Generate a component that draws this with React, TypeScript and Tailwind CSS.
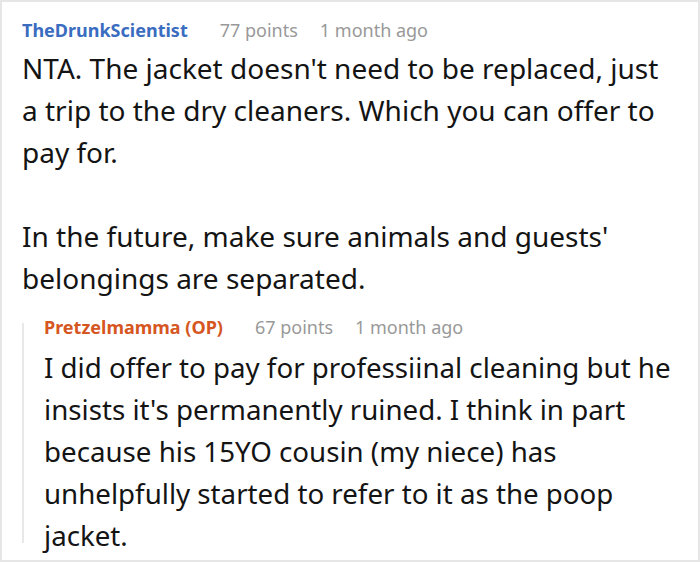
import React from 'react';

type Meta = { author: string; points: string; time: string; op?: boolean };

const Header: React.FC<Meta> = ({ author, points, time, op }) => (
  <div className="flex items-center text-[18px] leading-[24px] whitespace-nowrap">
    <span className={`font-bold mr-[32px] ${op ? 'text-[#d6561f]' : 'text-[#3a6cbf]'}`}>{author}</span>
    <span className="text-[#999999] mr-[22px]">{points}</span>
    <span className="text-[#999999]">{time}</span>
  </div>
);

export default function App() {
  return (
    <div
      className="w-[700px] h-[562px] border-2 border-[#e6e6e6] bg-white overflow-hidden"
      style={{ fontFamily: '"Noto Sans", "Open Sans", sans-serif' }}
    >
      <div className="pl-[20px] pr-[22px] pt-[16px]">
        <Header author="TheDrunkScientist" points="77 points" time="1 month ago" />
        <div className="text-[28px] leading-[42px] text-[#141414] mt-[5px]">
          <p>NTA. The jacket doesn't need to be replaced, just a trip to the dry cleaners. Which you can offer to pay for.</p>
          <p className="mt-[42px]">In the future, make sure animals and guests' belongings are separated.</p>
        </div>

        {/* reply */}
        <div className="mt-[16px] flex">
          <div className="w-[2px] shrink-0 bg-[#e8e8e8] mt-[8px] mb-[13px]"></div>
          <div className="pl-[20px] flex-1">
            <Header author="Pretzelmamma (OP)" points="67 points" time="1 month ago" op />
            <p className="text-[27.7px] leading-[42px] text-[#141414] mt-[7px]">
              I did offer to pay for professiinal cleaning but he insists it's permanently ruined. I think in part because his 15YO cousin (my niece) has unhelpfully started to refer to it as the poop jacket.
            </p>
          </div>
        </div>
      </div>
    </div>
  );
}
